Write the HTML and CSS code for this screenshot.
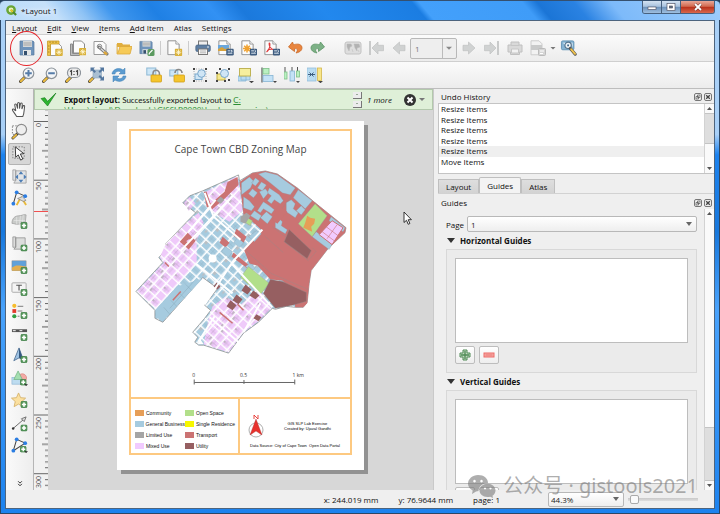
FILE: index.html
```html
<!DOCTYPE html>
<html lang="en">

<head>
 <meta charset="UTF-8">
 <meta name="viewport" content="width=device-width, initial-scale=1.0">
 <link rel="stylesheet" href="styles.css">
 <title>*Layout 1</title>
</head>

<body>
 <!-- Icon sprite -->
 <svg class="sprite" aria-hidden="true">
  <defs>
   <symbol id="badge-star" viewBox="0 0 8 8"><rect width="8" height="8" rx="1" fill="#d9b13b"/><path d="M4 1v6M1 4h6M2 2l4 4M6 2L2 6" stroke="#fff8d8" stroke-width=".9"/></symbol>
   <symbol id="badge-plus" viewBox="0 0 8 8"><rect x=".5" y=".5" width="7" height="7" rx="1.500" fill="#5b9a5f" stroke="#3d7f45"/><path d="M4 1.600v4.800M1.600 4h4.800" stroke="#fff" stroke-width="1.800"/></symbol>
   <symbol id="badge-export" viewBox="0 0 8 8"><rect width="8" height="7.500" rx="1.500" fill="#3f5d80"/><path d="M1.500 2.500h3M1.500 5h5M5 1.500l1.500 1.300L5 4" stroke="#e8f0f8" fill="none"/></symbol>
   <symbol id="disk" viewBox="0 0 16 16"><path d="M1 1h13l1 1v13H1z" fill="#6f94bb" stroke="#56789e" stroke-width=".7"/><rect x="4" y="1" width="9" height="6" fill="#d5d8d8"/><path d="M4.500 3h8M4.500 5h8" stroke="#999" stroke-width=".8"/><rect x="4" y="10" width="8" height="5" fill="#e4e6e6"/><rect x="5" y="11" width="3" height="4" fill="#35506e"/></symbol>
   <symbol id="sheet" viewBox="0 0 16 16"><path d="M2 .6h8.500l3.500 3.500v11.300H2z" fill="#fcfcfc" stroke="#8b8b8b"/><path d="M10.500 .6v3.500H14" fill="#eee" stroke="#8b8b8b" stroke-width=".8"/></symbol>
   <symbol id="new-layout" viewBox="0 0 16 16"><path d="M3.500 3.500h8l3 3v9h-11z" fill="#fcfcfc" stroke="#999"/><path d="M.5 1h11.500v3H3.500v11.500h-3z" fill="#efc34b" stroke="#c99c2a" stroke-width=".8"/><path d="M3 1.500v1.500M6 1.500v1.500M9 1.500v1.500M1 6h1.500M1 9h1.500M1 12h1.500" stroke="#8a6d1d" stroke-width=".7"/><use href="#badge-star" x="8" y="8.500" width="8" height="7.500"/></symbol>
   <symbol id="duplicate" viewBox="0 0 16 16"><path d="M.5 4h2v9.500h7v2h-9z" fill="#bbb" stroke="#8b8b8b"/><path d="M3.500 1h8l3 3v9h-11z" fill="#fcfcfc" stroke="#8b8b8b"/><use href="#badge-star" x="9" y="8" width="7.500" height="7.500"/></symbol>
   <symbol id="manager" viewBox="0 0 16 16"><path d="M1 1.500h9l3 3v10H1z" fill="#fcfcfc" stroke="#999"/><path d="M6 7l8 7" stroke="#777" stroke-width="3" stroke-linecap="round"/><path d="M6.500 7.500l7 6" stroke="#d8d8d8" stroke-width="1.500" stroke-linecap="round"/><circle cx="6.500" cy="6.500" r="2.200" fill="none" stroke="#888"/><path d="M11 12l3 2.500" stroke="#dca73c" stroke-width="2.500"/></symbol>
   <symbol id="folder" viewBox="0 0 16 16"><path d="M1 3h5l1 1.500h7V7H1z" fill="#e0ae3f"/><path d="M1 4v10h13l2-7.500H4L2 13" fill="#f6ca57" stroke="#dca83a" stroke-width=".8"/></symbol>
   <symbol id="save-template" viewBox="0 0 16 16"><use href="#disk" width="14" height="15"/><rect x="8.500" y="9" width="7" height="7" rx="1.500" fill="#5b9a5f"/><path d="M10 14.500l.5-1.500 3-3" stroke="#fff" stroke-width="1.200"/></symbol>
   <symbol id="add-page" viewBox="0 0 16 16"><use href="#sheet" x="-1" width="15" height="15.500"/><use href="#badge-star" x="7.500" y="8.500" width="8" height="7.500"/></symbol>
   <symbol id="print" viewBox="0 0 16 16"><rect x="3.500" y="1" width="9" height="5" fill="#eee" stroke="#777"/><rect x=".8" y="5" width="14.500" height="6.500" rx="1.500" fill="#5f7fa3" stroke="#46627f" stroke-width=".7"/><rect x="3.500" y="9" width="9" height="5.500" fill="#f7f7f7" stroke="#777"/><path d="M5 11h6M5 12.800h6" stroke="#999" stroke-width=".7"/><circle cx="13" cy="7" r=".8" fill="#fff"/></symbol>
   <symbol id="export-image" viewBox="0 0 16 16"><use href="#sheet" x="-1" width="15" height="15.500"/><rect x="0" y="5" width="11" height="6" fill="#6ba7dc"/><path d="M0 11V9l4-2 3 2 4-1v3z" fill="#d8a23b"/><use href="#badge-export" x="8" y="8.500" width="8" height="7.500"/></symbol>
   <symbol id="export-svg" viewBox="0 0 16 16"><use href="#sheet" x="-1" width="15" height="15.500"/><path d="M6 4.500v8M2 8.500h8M3.200 5.700l5.600 5.600M8.800 5.700l-5.600 5.600" stroke="#f0a12e" stroke-width="1.500"/><use href="#badge-export" x="8.500" y="8.500" width="8" height="7.500"/></symbol>
   <symbol id="export-pdf" viewBox="0 0 16 16"><use href="#sheet" x="-1" width="15" height="15.500"/><path d="M2.500 12C5 10 6.500 6 5.800 3.500 5.200 2 4.500 4 6 7c1 1.800 2 2.500 4 2.500M3 10.500c2-1.200 4-1.500 6.500-1" fill="none" stroke="#e0393a" stroke-width="1.100"/><use href="#badge-export" x="8.500" y="8.500" width="8" height="7.500"/></symbol>
   <symbol id="undo" viewBox="0 0 16 16"><path d="M5.500 2L1.500 7l6 4.500V8.700c3-.5 4 1.300 1.500 4.300 5-1 7-4 5.500-7C13 3.500 9.500 4 6.500 4.700z" fill="#e9853e" stroke="#ca6927" stroke-width=".8"/></symbol>
   <symbol id="redo" viewBox="0 0 16 16"><path d="M10.500 2l4 5-6 4.500V8.700c-3-.5-4 1.300-1.500 4.300-5-1-7-4-5.500-7C3 3.500 6.500 4 9.500 4.700z" fill="#7db186" stroke="#5c9466" stroke-width=".8"/></symbol>
   <symbol id="atlas" viewBox="0 0 18 16"><rect x="1" y="2" width="16" height="12" rx="2" fill="#dedede" stroke="#c2c2c2"/><path d="M3 4h4l1 2-2 1-1 4-2-4zM10 4h5l1 3-3 1v3l-2-3zM8 9l1 3M14 10l1 2" fill="#b2b2b2" stroke="#bbb" stroke-width=".5"/></symbol>
   <symbol id="arrow-left" viewBox="0 0 16 16"><path d="M2 8l6.500-6v3.300H14v5.400H8.500V14z" fill="#d0d2d2" stroke="#c0c2c2" stroke-width=".7"/></symbol>
   <symbol id="arrow-first" viewBox="0 0 16 16"><path d="M2 1v14" stroke="#c4c6c6" stroke-width="1.800"/><path d="M4 8l6-6v3.300h5.500v5.400H10V14z" fill="#d0d2d2" stroke="#c0c2c2" stroke-width=".7"/></symbol>
   <symbol id="print-off" viewBox="0 0 16 16"><path d="M4 2h8v3h3v7h-2.500v2.500h-9V12H1V5h3z" fill="#d9d9d9" stroke="#c0c0c0"/><path d="M4 5.500h8M4.500 9h7v4h-7z" fill="#f2f2f2" stroke="#c6c6c6"/></symbol>
   <symbol id="export-off" viewBox="0 0 16 16"><path d="M1 .8h8l3 3v11H1z" fill="#f2f2f2" stroke="#ccc"/><rect x="1" y="5" width="11" height="5" fill="#c9caca"/><rect x="8.500" y="8.500" width="7" height="7" rx="1" fill="#d5d5d5" stroke="#bbb"/><path d="M10 11h4M10 13.500h3" stroke="#fff"/></symbol>
   <symbol id="atlas-zoom" viewBox="0 0 18 18"><rect x=".5" y="1" width="14" height="10" rx="1.500" fill="#86b4d4" stroke="#5e8fb2"/><path d="M2 3h3v3zM10 3h3v5z" fill="#e5f1f7"/><circle cx="8" cy="6" r="3.600" fill="#eef4f8" stroke="#55738c" stroke-width="1.300"/><path d="M7 5h2v2H7z" fill="#406a8c"/><path d="M10.500 9.500l5.500 6.500" stroke="#555" stroke-width="3.400" stroke-linecap="round"/><path d="M11.500 10.500l4.300 5" stroke="#eec14c" stroke-width="2.200" stroke-linecap="round"/></symbol>
   <symbol id="lens" viewBox="0 0 16 16"><path d="M6 10L1.500 14.500" stroke="#4c4538" stroke-width="3" stroke-linecap="round"/><path d="M4.800 11.200l-3 3" stroke="#edbd40" stroke-width="2" stroke-linecap="round"/><circle cx="9.500" cy="6.300" r="5.300" fill="#f3f5f7" stroke="#8d949b" stroke-width="1.200"/></symbol>
   <symbol id="zoom-in" viewBox="0 0 16 16"><use href="#lens"/><path d="M9.500 3v6.600M6.200 6.300h6.600" stroke="#567ca8" stroke-width="2"/></symbol>
   <symbol id="zoom-out" viewBox="0 0 16 16"><use href="#lens"/><path d="M6.200 6.300h6.600" stroke="#567ca8" stroke-width="2"/></symbol>
   <symbol id="zoom-actual" viewBox="0 0 16 16"><path d="M6 10L1.500 14.500" stroke="#4c4538" stroke-width="3" stroke-linecap="round"/><path d="M4.800 11.200l-3 3" stroke="#edbd40" stroke-width="2" stroke-linecap="round"/><rect x="2.500" y="1" width="13" height="9.500" rx="4.500" fill="#eee" stroke="#8d949b" stroke-width="1.200"/><path d="M5 4.500l1.500-1v5M11 4.500l1.500-1v5M9 4v1M9 7v1" stroke="#444" stroke-width="1.200" fill="none"/></symbol>
   <symbol id="zoom-full" viewBox="0 0 16 16"><path d="M5 11L1.500 14.500" stroke="#4c4538" stroke-width="3" stroke-linecap="round"/><path d="M4.500 11.500l-2.700 2.700" stroke="#edbd40" stroke-width="2" stroke-linecap="round"/><rect x="5" y="3" width="8.500" height="8" fill="#a9bfd2" stroke="#8ba5bd" stroke-width=".6"/><path d="M2.500 .5h4.500L5.500 2 8 4.500 6.500 6 4 3.500 2.500 5zM16 .5v4.500l-1.500-1.500L12 6l-1.500-1.500L13 2 11.500 .5zM16 13.500h-4.500L13 12l-2.500-2.500L12 8l2.500 2.500L16 9z" fill="#54779f"/></symbol>
   <symbol id="refresh" viewBox="0 0 16 16"><path d="M1 7C1.500 2 8 0 12 3l2-2v6H8l2-2C7 3.500 4.500 4.500 4 7zM15 9c-.5 5-7 7-11 4l-2 2V9h6l-2 2c3 1.500 5.500 .5 6-2z" fill="#5b9bd0" stroke="#4482b5" stroke-width=".5"/></symbol>
   <symbol id="lock" viewBox="0 0 16 16"><rect x=".8" y="1" width="9" height="7" fill="#cce6f7" stroke="#8db8d4"/><path d="M7 9V6.500a3.200 3.200 0 0 1 6.400 0V9" fill="none" stroke="#888" stroke-width="1.500"/><rect x="5" y="8" width="10.500" height="7" rx=".8" fill="#f5c52c" stroke="#cfa01c" stroke-width=".8"/></symbol>
   <symbol id="unlock" viewBox="0 0 16 16"><rect x=".8" y="3" width="8" height="6" fill="#cce6f7" stroke="#8db8d4"/><path d="M6 6a3.500 3.500 0 0 1 7 0" fill="none" stroke="#888" stroke-width="1.700"/><rect x="5" y="8" width="10.500" height="7" rx=".8" fill="#f5c52c" stroke="#cfa01c" stroke-width=".8"/></symbol>
   <symbol id="group" viewBox="0 0 16 16"><path d="M1 1h2v2H1zM13 1h2v2h-2zM1 13h2v2H1zM13 13h2v2h-2z" fill="#444"/><path d="M4 2h8M4 14h8M2 4v8M14 4v8" stroke="#999" stroke-dasharray="1 1.500" stroke-width=".8"/><rect x="3" y="7" width="7" height="5.500" fill="#cfe5f5" stroke="#79a7cb"/><circle cx="9.500" cy="6.500" r="3.800" fill="#cfe5f5" stroke="#79a7cb"/></symbol>
   <symbol id="ungroup" viewBox="0 0 16 16"><rect x="2" y="7" width="8" height="6" fill="#f5e88e" stroke="#bfae44"/><circle cx="9.500" cy="6.500" r="4" fill="#cfe5f5" stroke="#79a7cb"/><path d="M1 5h2v2H1zM13 1h2v2h-2zM1 13h2v2H1zM13 12h2v2h-2zM4 1h2v2H4zM9 13h2v2H9z" fill="#444"/></symbol>
   <symbol id="raise" viewBox="0 0 16 16"><path d="M0 9h8v5H0zM3 8h9v5H3z" fill="#b9dcf2" stroke="#86b5d4" stroke-width=".8"/><rect x="1.500" y="1.500" width="11" height="7.500" fill="#f5ef9e" stroke="#bfb355"/><path d="M11 14h5l-2.500 2.200z" fill="#444"/></symbol>
   <symbol id="align" viewBox="0 0 16 16"><path d="M1 .5v15" stroke="#555" stroke-width="1.200"/><rect x="2" y="1.500" width="6" height="5.500" fill="#b9f0c1" stroke="#7dbf88" stroke-width=".8"/><rect x="2" y="8.500" width="10" height="6" fill="#c4e2f6" stroke="#86b5d4" stroke-width=".8"/><path d="M12 14h4l-2 2z" fill="#444"/></symbol>
   <symbol id="distribute" viewBox="0 0 16 16"><path d="M1 0v7M8 0v4M13.500 0v4" stroke="#555"/><rect x="0" y="5" width="3" height="7" fill="#b9f0c1" stroke="#7dbf88" stroke-width=".8"/><rect x="6" y="4" width="4.500" height="10" fill="#c4e2f6" stroke="#86b5d4" stroke-width=".8"/><rect x="12.500" y="4" width="3" height="6" fill="#b9f0c1" stroke="#7dbf88" stroke-width=".8"/><path d="M12 14h4l-2 2z" fill="#444"/></symbol>
   <symbol id="resize" viewBox="0 0 16 16"><rect x="0" y="1" width="9" height="13" fill="#b9dcf2" stroke="#94bedb" stroke-width=".8"/><path d="M1 7.500h3M5 7.500h3M2.500 5.500l2 2-2 2M6.500 5.500l-2 2 2 2" stroke="#2f4f73" fill="none" stroke-width=".9"/><rect x="10.500" y="1" width="4" height="12.500" fill="#f8e68a" stroke="#d3b64b" stroke-width=".8"/><path d="M11 14h5l-2.500 2.200z" fill="#444"/></symbol>
   <symbol id="hand" viewBox="0 0 18 18"><path d="M6 16.500C4 13 2 11 1.500 9.500c0-1.500 1.800-1.200 3 .7L5 10 4 4.500c-.2-1.700 1.700-1.900 2 0L7 8V2.800c0-1.700 2-1.700 2 0V8l1-4.800c.3-1.700 2-1.300 1.900.3L11.500 8.500l1.200-3c.6-1.400 2.100-.7 1.700.7C13.800 9.500 14 14 12.500 16.500z" fill="#fff" stroke="#555" stroke-width="1.100"/></symbol>
   <symbol id="zoom-tool" viewBox="0 0 18 18"><rect x="1.500" y="3" width="10" height="9" fill="none" stroke="#777" stroke-dasharray="1.500 1.500"/><path d="M7 11L2 16" stroke="#4c4538" stroke-width="3" stroke-linecap="round"/><path d="M5.500 12.500L2.200 15.800" stroke="#edbd40" stroke-width="1.900" stroke-linecap="round"/><circle cx="11" cy="7" r="5.500" fill="#eee" stroke="#8d8d8d" stroke-width="1.300"/></symbol>
   <symbol id="select-tool" viewBox="0 0 18 18"><rect x="2" y="2" width="12" height="12" fill="#ddd" stroke="#777" stroke-dasharray="1.500 1.500"/><path d="M4.500 2l.5 11 2.700-2.500 2.500 5.500 2.300-1.200-2.600-5.300 3.800-.3z" fill="#fff" stroke="#333"/></symbol>
   <symbol id="move-content" viewBox="0 0 18 18"><path d="M2 2h3v11H2zM5 3h11v13H3l2-3z" fill="#e2e4e6" stroke="#999" stroke-width=".8"/><path d="M10.500 3.500l2.500 3H8zM10.500 15.500l2.500-3H8zM4.500 9.500l3-2.500v5zM16.500 9.500l-3-2.500v5z" fill="#4c7db5"/></symbol>
   <symbol id="edit-nodes" viewBox="0 0 18 18"><path d="M2.500 14.500L6 2.500l9 4" fill="none" stroke="#444" stroke-width="1.100"/><path d="M6 16c2-5 4-7 5-8l5 8" fill="none" stroke="#e8b93a" stroke-width="2"/><path d="M7 9l5-2 4 4-3 1z" fill="#ddd" stroke="#777" stroke-width=".7"/><circle cx="6" cy="2.500" r="2" fill="#2b7de2"/><circle cx="15" cy="6.500" r="2" fill="#2b7de2"/><circle cx="2.500" cy="14.500" r="2" fill="#2b7de2"/></symbol>
   <symbol id="add-map" viewBox="0 0 18 18"><path d="M1 11c0-5 3-8 7-8s5-2 8-1l-1 9c-4-1-5 1-8 1s-4-1-6-1z" fill="#c9cbc9" stroke="#999" stroke-width=".7"/><path d="M3 8h12M6 4v8M10 3l-1 9M13 2l-1 9" stroke="#eee" stroke-width=".6"/><use href="#badge-plus" x="10" y="9.500" width="7.500" height="7.500"/></symbol>
   <symbol id="add-3d" viewBox="0 0 18 18"><path d="M2 2h3v11H2zM5 3h10v12H3l2-2z" fill="#dcdddc" stroke="#8e8e8e" stroke-width=".8"/><use href="#badge-plus" x="10" y="10" width="7.500" height="7.500"/></symbol>
   <symbol id="add-picture" viewBox="0 0 18 18"><rect x="1" y="3" width="15" height="10.500" fill="#5fa1da" stroke="#888" stroke-width=".5"/><path d="M1 13.500V10c3-2 5-2.500 8-2s5 1 7 1v4.500z" fill="#e2ae50"/><use href="#badge-plus" x="10" y="9.500" width="7.500" height="7.500"/></symbol>
   <symbol id="add-label" viewBox="0 0 18 18"><rect x="1" y="3" width="15" height="10" rx="1" fill="#f4f4f4" stroke="#aaa"/><path d="M5.500 5.500h6M8.500 5.500v5.500" stroke="#555" stroke-width="1.200"/><use href="#badge-plus" x="10" y="9.500" width="7.500" height="7.500"/></symbol>
   <symbol id="add-legend" viewBox="0 0 18 18"><circle cx="3.500" cy="3" r="2.200" fill="#f6bd2d"/><rect x="1.500" y="6.500" width="4" height="4" fill="#e23a2d"/><circle cx="3.500" cy="14" r="2.200" fill="#2f9e42"/><path d="M7 3.500h6M7 8.500h5M7 14h2" stroke="#777"/><use href="#badge-plus" x="10" y="9.500" width="7.500" height="7.500"/></symbol>
   <symbol id="add-scalebar" viewBox="0 0 18 18"><rect x="1" y="4.500" width="16" height="3" fill="#555"/><path d="M2 6h3M9 6h3" stroke="#fff"/><use href="#badge-plus" x="10" y="9.500" width="7.500" height="7.500"/></symbol>
   <symbol id="add-north" viewBox="0 0 18 18"><path d="M8.500 1L3 14.500l5.500-3 4.500 2z" fill="#9fc3e4" stroke="#4a6c90" stroke-width=".9"/><path d="M8.500 1v10.500l4.500 2z" fill="#34587f"/><use href="#badge-plus" x="10" y="9.500" width="7.500" height="7.500"/></symbol>
   <symbol id="add-shape" viewBox="0 0 18 18"><circle cx="12" cy="8.500" r="4.500" fill="#f3aaa5" stroke="#d7827d" stroke-width=".7"/><rect x="1" y="8" width="9" height="7" fill="#bddcf0" stroke="#8db5d2" stroke-width=".7"/><path d="M7.500 1L3 10h9z" fill="#a5dfb1" stroke="#68af79" stroke-width=".7"/><use href="#badge-plus" x="9.500" y="9.500" width="7" height="7"/><path d="M14 15h4l-2 2z" fill="#222"/></symbol>
   <symbol id="add-marker" viewBox="0 0 18 18"><path d="M8 1l2.200 5 5.300.5-4 3.600 1.200 5.400L8 12.800l-4.700 2.700 1.200-5.400-4-3.600L5.800 6z" fill="#fbe0a0" stroke="#d5b066" stroke-width=".9"/><use href="#badge-plus" x="10" y="9.500" width="7.500" height="7.500"/></symbol>
   <symbol id="add-arrow" viewBox="0 0 18 18"><path d="M2 14.500L13 5" stroke="#666"/><path d="M16 2l-5 2 3 3z" fill="#ddd" stroke="#555" stroke-width=".8"/><circle cx="2.300" cy="14.200" r="1.300" fill="#333"/><use href="#badge-plus" x="10" y="10" width="7.500" height="7.500"/></symbol>
   <symbol id="add-node" viewBox="0 0 18 18"><path d="M2.500 14.500L6 2.500l9 4z" fill="#f6f6f6" stroke="#444" stroke-width="1.100"/><circle cx="6" cy="2.500" r="2" fill="#2b7de2"/><circle cx="15" cy="6.500" r="2" fill="#2b7de2"/><circle cx="2.500" cy="14.500" r="2" fill="#2b7de2"/><use href="#badge-plus" x="9.500" y="9.500" width="7" height="7"/><path d="M14 15h4l-2 2z" fill="#222"/></symbol>
   <symbol id="dock-float" viewBox="0 0 8 8"><rect x=".5" y=".5" width="7" height="7" rx="1.500" fill="#eee" stroke="#777"/><path d="M3.500 2h2.500v2.500H3.500zM2 3.500h2.500V6H2z" fill="none" stroke="#555" stroke-width=".7"/></symbol>
   <symbol id="dock-close" viewBox="0 0 8 8"><rect x=".5" y=".5" width="7" height="7" rx="1.500" fill="#eee" stroke="#777"/><path d="M2.200 2.200l3.600 3.600M5.800 2.200L2.200 5.800" stroke="#444" stroke-width="1.300"/></symbol>
  </defs>
 </svg>

 <div class="window">
  <header class="titlebar">
   <svg class="logo" viewBox="0 0 12 12"><circle cx="5.500" cy="5.500" r="4" fill="#e8f3c0" stroke="#69a536" stroke-width="2.600"/><path d="M5.500 5.500L11 11" stroke="#4f8a2b" stroke-width="2.400"/><path d="M5 5l2.500 2.500" stroke="#eeca2c" stroke-width="2"/></svg>
   <h1>*Layout 1</h1>
   <div class="window-buttons">
    <button class="win-min" aria-label="Minimize"><svg viewBox="0 0 10 8"><rect x="1" y="4" width="8" height="2.500" fill="#fff" stroke="#445" stroke-width=".6"/></svg></button>
    <button class="win-max" aria-label="Maximize"><svg viewBox="0 0 10 8"><rect x="1" y=".5" width="8" height="7" fill="#fff" stroke="#445" stroke-width=".6"/><rect x="3.500" y="3" width="3" height="2" fill="#678" stroke="#445" stroke-width=".6"/></svg></button>
    <button class="win-close" aria-label="Close"><svg viewBox="0 0 10 8"><path d="M2 1l6 6M8 1L2 7" stroke="#633" stroke-width="2.800"/><path d="M2 1l6 6M8 1L2 7" stroke="#fff" stroke-width="1.800"/></svg></button>
   </div>
  </header>

  <div class="client">
   <nav class="menubar">
    <a href="#"><u>L</u>ayout</a>
    <a href="#"><u>E</u>dit</a>
    <a href="#"><u>V</u>iew</a>
    <a href="#"><u>I</u>tems</a>
    <a href="#"><u>A</u>dd Item</a>
    <a href="#">Atlas</a>
    <a href="#">Settings</a>
   </nav>

   <div class="toolbar">
    <span class="grip"></span>
    <button aria-label="Save project"><svg><use href="#disk"/></svg><span class="ring"></span></button>
    <span class="gap"></span>
    <button aria-label="New layout"><svg><use href="#new-layout"/></svg></button>
    <button aria-label="Duplicate layout"><svg><use href="#duplicate"/></svg></button>
    <button aria-label="Layout manager"><svg><use href="#manager"/></svg></button>
    <button aria-label="Add items from template"><svg><use href="#folder"/></svg></button>
    <button aria-label="Save as template"><svg><use href="#save-template"/></svg></button>
    <span class="sep"></span>
    <button aria-label="Add pages"><svg><use href="#add-page"/></svg></button>
    <span class="sep"></span>
    <button aria-label="Print layout"><svg><use href="#print"/></svg></button>
    <button aria-label="Export as image"><svg><use href="#export-image"/></svg></button>
    <button aria-label="Export as SVG"><svg><use href="#export-svg"/></svg></button>
    <button aria-label="Export as PDF"><svg><use href="#export-pdf"/></svg></button>
    <button aria-label="Undo"><svg><use href="#undo"/></svg></button>
    <button aria-label="Redo"><svg><use href="#redo"/></svg></button>
    <span class="grip wide"></span>
    <button aria-label="Preview atlas" disabled><svg class="large"><use href="#atlas"/></svg></button>
    <button aria-label="First feature" disabled><svg><use href="#arrow-first"/></svg></button>
    <button aria-label="Previous feature" disabled><svg><use href="#arrow-left"/></svg></button>
    <select class="atlas-page" aria-label="Atlas page" disabled><option>1</option></select>
    <button class="flip" aria-label="Next feature" disabled><svg><use href="#arrow-left"/></svg></button>
    <button class="flip" aria-label="Last feature" disabled><svg><use href="#arrow-first"/></svg></button>
    <button aria-label="Print atlas" disabled><svg><use href="#print-off"/></svg></button>
    <button aria-label="Export atlas" disabled><svg><use href="#export-off"/></svg></button>
    <span class="caret"></span>
    <button aria-label="Atlas settings"><svg class="large"><use href="#atlas-zoom"/></svg></button>
   </div>

   <div class="toolbar">
    <span class="grip"></span>
    <button aria-label="Zoom in"><svg><use href="#zoom-in"/></svg></button>
    <button aria-label="Zoom out"><svg><use href="#zoom-out"/></svg></button>
    <button aria-label="Zoom to 100%"><svg><use href="#zoom-actual"/></svg></button>
    <button aria-label="Zoom full"><svg><use href="#zoom-full"/></svg></button>
    <button aria-label="Refresh view"><svg><use href="#refresh"/></svg></button>
    <span class="grip wide"></span>
    <button aria-label="Lock items"><svg><use href="#lock"/></svg></button>
    <button aria-label="Unlock items"><svg><use href="#unlock"/></svg></button>
    <button aria-label="Group"><svg><use href="#group"/></svg></button>
    <button aria-label="Ungroup"><svg><use href="#ungroup"/></svg></button>
    <button aria-label="Raise"><svg><use href="#raise"/></svg></button>
    <button aria-label="Align"><svg><use href="#align"/></svg></button>
    <button aria-label="Distribute"><svg><use href="#distribute"/></svg></button>
    <button aria-label="Resize"><svg><use href="#resize"/></svg></button>
   </div>

   <main class="workspace">
    <aside class="toolbox">
     <span class="grip-top"></span>
     <div class="tools">
      <button aria-label="Pan layout"><svg><use href="#hand"/></svg></button>
      <button aria-label="Zoom"><svg><use href="#zoom-tool"/></svg></button>
      <button class="active" aria-label="Select item"><svg><use href="#select-tool"/></svg></button>
      <button aria-label="Move item content"><svg><use href="#move-content"/></svg></button>
      <button aria-label="Edit nodes"><svg><use href="#edit-nodes"/></svg></button>
      <button aria-label="Add map"><svg><use href="#add-map"/></svg></button>
      <button aria-label="Add 3D map"><svg><use href="#add-3d"/></svg></button>
      <button aria-label="Add picture"><svg><use href="#add-picture"/></svg></button>
      <button aria-label="Add label"><svg><use href="#add-label"/></svg></button>
      <button aria-label="Add legend"><svg><use href="#add-legend"/></svg></button>
      <button aria-label="Add scale bar"><svg><use href="#add-scalebar"/></svg></button>
      <button aria-label="Add north arrow"><svg><use href="#add-north"/></svg></button>
      <button aria-label="Add shape"><svg><use href="#add-shape"/></svg></button>
      <button aria-label="Add marker"><svg><use href="#add-marker"/></svg></button>
      <button aria-label="Add arrow"><svg><use href="#add-arrow"/></svg></button>
      <button aria-label="Add node item"><svg><use href="#add-node"/></svg></button>
     </div>
     <button class="more-tools" aria-label="More tools"><svg viewBox="0 0 8 8"><path d="M1.500 1L4 3.500 6.500 1M1.500 4.500L4 7l2.500-2.500" fill="none" stroke="#222" stroke-width="1.200"/></svg></button>
    </aside>

    <section class="view">
     <div class="message">
      <svg class="tick" viewBox="0 0 18 14"><path d="M1 6l4-1 3 4 9-9-9 14z" fill="#2db52f" stroke="#157a1c" stroke-width=".7"/></svg>
      <p><b>Export layout:</b> Successfully exported layout to <a href="#">C:<br>\Users\ujaval\Downloads\GISSLP2020\landuse_mapping\map.png</a></p>
      <div class="message-scroll"><button aria-label="Scroll up"></button><button aria-label="Scroll down"></button></div>
      <i>1 more</i>
      <button class="dismiss" aria-label="Dismiss"><svg viewBox="0 0 12 12"><circle cx="6" cy="6" r="6" fill="#333"/><path d="M3.500 3.500l5 5M8.500 3.500l-5 5" stroke="#fff" stroke-width="2"/></svg></button>
      <span class="caret"></span>
     </div>
     <div class="canvas-row">
      <svg class="ruler" viewBox="34 110 14 380" preserveAspectRatio="xMinYMin slice">
       <defs>
        <pattern id="ticks" x="34" y="121" width="14" height="58.700" patternUnits="userSpaceOnUse">
         <path d="M0 .5h14" stroke="#666"/>
         <path d="M8 29.800h6" stroke="#555"/>
         <path d="M11 6.400h3M11 12.200h3M11 18.100h3M11 24h3M11 35.700h3M11 41.600h3M11 47.500h3M11 53.300h3" stroke="#666"/>
        </pattern>
       </defs>
       <rect x="34" y="110" width="14" height="380" fill="#f1f1f1"/>
       <rect x="34" y="110" width="14" height="380" fill="url(#ticks)"/>
       <path d="M34 211.500h14" stroke="#f05050"/>
       <g class="ruler-text">
        <text transform="translate(41 127) rotate(-90)">0</text>
        <text transform="translate(41 190) rotate(-90)">50</text>
        <text transform="translate(41 253) rotate(-90)">100</text>
        <text transform="translate(41 312) rotate(-90)">150</text>
        <text transform="translate(41 370) rotate(-90)">200</text>
        <text transform="translate(41 429) rotate(-90)">250</text>
        <text transform="translate(41 488) rotate(-90)">300</text>
       </g>
      </svg>
      <div class="canvas">
       <article class="sheet">
        <div class="map-frame">
         <h2>Cape Town CBD Zoning Map</h2>
         <svg class="map" viewBox="130 160 220 237">
          <defs>
           <pattern id="blocks-blue" width="27" height="17" patternUnits="userSpaceOnUse" patternTransform="translate(135 291) rotate(42)">
            <rect width="27" height="17" fill="#fff"/>
            <path d="M0 0h7.400v7H0zM9 0h7.400v7H9zM18 0h7.400v7h-7.400zM0 8.500h7.400v7H0zM9 8.500h7.400v7H9zM18 8.500h7.400v7h-7.400z" fill="#a6cbdf"/>
            <path d="M18 0h3v3h-3zM11 8.500h2v3h-2z" fill="#b9c0c5"/>
            <path d="M3.500 0v7M0 3.400h7M12 0v3.500M9 3.500h7M21 8.500v7M18 12h7M0 12h7" stroke="#8fb3c6" stroke-width=".4"/>
           </pattern>
           <pattern id="blocks-lilac" width="27" height="17" patternUnits="userSpaceOnUse" patternTransform="translate(135 291) rotate(42)">
            <rect width="27" height="17" fill="#fff"/>
            <path d="M0 0h7.400v7H0zM9 0h7.400v7H9zM18 0h7.400v7h-7.400zM0 8.500h7.400v7H0zM9 8.500h7.400v7H9zM18 8.500h7.400v7h-7.400z" fill="#efcafa"/>
            <path d="M5 0h2v3H5zM18 11h2v2h-2zM9 4h2v3H9z" fill="#c3b6c6"/>
            <path d="M3.500 0v7M0 3.500h7M12 0v7M9 3.500h7M21 8.500v7M18 12h7M3.500 8.500v7M0 12h7M12 8.500v7" stroke="#b99bc0" stroke-width=".4"/>
           </pattern>
          </defs>
          <path d="M182 202L189 195 202 190 238 174 239 180 252 172 265 170 277 173 297 187 315 202 346 227 345 232 328 248 311 270 309 283 307 302 303 307 295 307 286 306 275 309 272 308 258 322 243 333 228 353 203 345 198 345 194 342 197 337 192 332 204 318 210 310 204 305 217 288 202 277 162 322 154 318 154 310 135 291 162 262 158 257 164 250 165 243 187 220 195 212z" fill="url(#blocks-blue)" stroke="#888" stroke-width=".7"/>
          <!-- mixed use -->
          <path d="M136 291L163 262 159 257 165 243 188 220 198 212 203 222 196 240 196 262 176 285 155 309z" fill="url(#blocks-lilac)"/>
          <path d="M205 191L237 175 242 210 229 221 211 211zM183 202L189 196 195 203 188 210zM212 306L225 296 240 305 258 287 271 308 258 321 243 332 228 352 203 344 208 318z" fill="url(#blocks-lilac)"/>
          <path d="M202 278L162 321 155 317 155 309 176 286z" fill="#a6cbdf"/>
          <path d="M193 281l-24 27M185 284l6 6M178 292l6 6M170 300l6 6M163 307l6 7" fill="none" stroke="#87a9ba" stroke-width=".5"/>
          <!-- transport -->
          <path d="M203 191L206 191 210 203 224 191 227 181 237 176 238 184 224 198 211 209 206 206z" fill="#cb7373"/>
          <path d="M239 181L252 172 265 170 277 173 297 187 315 202 346 227 345 232 328 248 311 270 309 283 307 303 303 307 295 307 292 290 282 280 270 279 257 265 249 263 243 248 252 239 262 230 252 221 243 214z" fill="#cb7373"/>
          <path d="M187 232l8 8-7 9-9-8zM222 236l7 6-4 5-6-5zM236 228l10 8-3 6-10-7zM233 252l16 13-2 3-16-12z" fill="#cb7373"/>
          <path d="M219 312l13 11M172 300l8-9M237 304l6 6M164 262l4 4" stroke="#cb7373" stroke-width="1.500"/>
          <path d="M186 241l3-2" stroke="#ecc8f5" stroke-width="1.500"/>
          <path d="M264 235l19 17M243 248l28 25 37 16M284 241l24 19 8-9-4-4M297 187l-24 33M290 240l-18-14M315 202l-10 15" fill="none" stroke="#a98282" stroke-width=".6"/>
          <!-- general business -->
          <g fill="#a6cbdf" stroke="#8a9ba5" stroke-width=".3">
           <path d="M258 173L265 171 277 174 295 187 290 194 282 192 270 182z"/>
           <path d="M298 189L312 200 305 208 293 197z"/>
           <path d="M241 182l8-6 4 4-3 7-9 7zM255 177l4 3-4 5-4-3zM261 181l5 3-4 6-5-3zM252 188l5 4-4 5-5-4zM243 196l6 4 5 6-3 4-8-3zM259 191l6-3 3 4-5 6zM269 187l10 7 4 6-3 3-6-4-3 4-4-3 4-5-4-3zM263 201l6 4 5 4-3 4-8-5-3 4-3-2zM254 210l7 5-3 5-8-5zM266 211l6 5-5 7-7-6zM286 202l5-3 4 4-2 5 5 4-3 5-9-6zM301 205l4 4-4 5-5-4zM275 222l4-4 3 3-1 4 6 4-2 4-10-6zM312 236l4-5 16 13-3 5zM256 230l5 3-7 8-6-5zM331 216l14 11-2 4-14-11z"/>
           <path d="M237 237l6 5-4 5-6-5zM225 246l7 5-4 6-7-6zM249 263l6 4-4 4-6-5z"/>
          </g>
          <path d="M278 205l9 6-10 12-5-4z" fill="#cb7373"/>
          <!-- open space, community, mixed use -->
          <path d="M315 203L327 215 312 236 298 223zM248 266L269 283 260 294 240 277zM247 217l5 3-2 5-5-3z" fill="#b2df8a" stroke="#999" stroke-width=".4"/>
          <path d="M307 215l3 2 5 1-1 5-3 3 1 5-9-4 2-5z" fill="#e69e57"/>
          <path d="M332 220L343 227 332 244 319 234z" fill="#f1cbff" stroke="#cb7373" stroke-width="1"/>
          <path d="M326 226l12 9M322 231l12 9M337 224l-10 14" stroke="#cb7373" stroke-width=".6"/>
          <!-- limited use -->
          <path d="M240 216l6-4 4 3-5 8-5-2zM220 196l4 3-4 4-4-3z" fill="#a5a5a5"/>
          <!-- utility -->
          <path d="M289 229L311 250 307 258 284 241zM270 279L282 281 306 292 306 301 292 305 275 308 263 293z" fill="#965f61" stroke="#888" stroke-width=".4"/>
          <path d="M245 284l6 5-4 5-6-4zM253 290l6 5-4 4-6-4zM236 294l6 5-4 5-6-4zM230 300l6 5-4 5-6-4zM216 282l4 4-3 3-4-3zM256 314l5 3-3 4-5-3z" fill="#965f61"/>
          <!-- main streets -->
          <path d="M188 231L215 199M204 192l9 24 27 23M262 229L233 260 204 304M209 317L238 342M231 263L272 307M195 263L232 293M180 250L232 195M214 316L198 341M243 332L260 303" fill="none" stroke="#fff" stroke-width="2"/>
          <circle cx="212" cy="258" r="4" fill="#fff"/>
          <path d="M199 338l4 6-6 0z" fill="#fff"/>
          <!-- scale bar -->
          <path d="M193.500 379.500v5M243.500 380v4M294.500 379.500v5M193.500 382.500h101" stroke="#666" fill="none"/>
          <g class="scale-text"><text x="193" y="377">0</text><text x="243" y="377">0.5</text><text x="298" y="377">1 km</text></g>
         </svg>
        </div>
        <div class="sheet-footer">
         <ul class="legend">
          <li><span class="swatch community"></span>Community</li>
          <li><span class="swatch open"></span>Open Space</li>
          <li><span class="swatch business"></span>General Business</li>
          <li><span class="swatch residence"></span>Single Residence</li>
          <li><span class="swatch limited"></span>Limited Use</li>
          <li><span class="swatch transport"></span>Transport</li>
          <li><span class="swatch mixed"></span>Mixed Use</li>
          <li><span class="swatch utility"></span>Utility</li>
         </ul>
         <div class="credits">
          <div class="author">
           <svg class="north" viewBox="0 0 16 24"><path d="M6 5V1l4 4V1" fill="none" stroke="#e8322d" stroke-width=".9"/><circle cx="8" cy="16" r="7" fill="none" stroke="#999" stroke-width=".8"/><path d="M8 5l6 16-6-4-6 4z" fill="#e8322d" stroke="#a33" stroke-width=".4"/></svg>
           <p>GIS SLP Lab Exercise<br>Created by: Ujaval Gandhi</p>
          </div>
          <p>Data Source: City of Cape Town&nbsp; Open Data Portal</p>
         </div>
        </div>
       </article>
       <svg class="pointer" viewBox="0 0 9 14"><path d="M1 1v10.500l2.500-2.200 1.700 4 1.700-.8-1.700-3.800h3.200z" fill="#fff" stroke="#222" stroke-width=".9"/></svg>
      </div>
     </div>
    </section>

    <aside class="docks">
     <section class="dock">
      <header><h3>Undo History</h3><button aria-label="Float"><svg><use href="#dock-float"/></svg></button><button aria-label="Close"><svg><use href="#dock-close"/></svg></button></header>
      <div class="history">
       <ul>
        <li>Resize Items</li>
        <li>Resize Items</li>
        <li>Resize Items</li>
        <li>Resize Items</li>
        <li class="current">Resize Items</li>
        <li>Move Items</li>
       </ul>
       <div class="scrollbar at-end"><button class="up" aria-label="Scroll up"></button><span class="track"></span><span class="thumb"></span><button class="down" aria-label="Scroll down"></button></div>
      </div>
     </section>
     <div class="tabs">
      <button>Layout</button>
      <button class="selected">Guides</button>
      <button>Atlas</button>
     </div>
     <section class="dock guides">
      <header><h3>Guides</h3><button aria-label="Float"><svg><use href="#dock-float"/></svg></button><button aria-label="Close"><svg><use href="#dock-close"/></svg></button></header>
      <div class="guides-scroll">
       <div class="guides-form">
        <div class="page-row"><label for="page">Page</label><select id="page"><option>1</option></select></div>
        <h4>Horizontal Guides</h4>
        <div class="group">
         <div class="guide-list"></div>
         <div class="group-buttons">
          <button aria-label="Add guide"><svg viewBox="0 0 12 12"><path d="M4 1h4v3h3v4H8v3H4V8H1V4h3z" fill="#bfd8bf" stroke="#4f8a55"/><path d="M6 2v8M2 6h8" stroke="#4f8a55" stroke-width="1.300"/></svg></button>
          <button aria-label="Remove guide"><svg viewBox="0 0 12 12"><rect x="1" y="4" width="10" height="4" fill="#f4aaa6" stroke="#ee6a66"/><path d="M2.500 6h7" stroke="#ee6a66" stroke-width=".8"/></svg></button>
         </div>
        </div>
        <h4>Vertical Guides</h4>
        <div class="group">
         <div class="guide-list"></div>
         <div class="group-buttons">
          <button aria-label="Add guide"></button>
          <button aria-label="Remove guide"></button>
         </div>
        </div>
       </div>
       <div class="scrollbar"><button class="up" aria-label="Scroll up"></button><span class="thumb"></span><span class="track"></span><button class="down" aria-label="Scroll down"></button></div>
      </div>
     </section>
    </aside>
   </main>

   <footer class="statusbar">
    <span>x: 244.019 mm</span>
    <span>y: 76.9644 mm</span>
    <span class="page-no">page: 1</span>
    <select class="zoom" aria-label="Zoom level"><option>44.3%</option></select>
    <input type="range" class="zoom-slider" aria-label="Zoom" min="0" max="100" value="3">
    <span class="size-grip"></span>
   </footer>
  </div>

  <div class="watermark">
   <svg viewBox="0 0 28 23"><path fill-rule="evenodd" d="M10 0c6 0 10 3.500 10 8-5 0-9.500 3-9.500 8L8 16.500 4 19l.7-3.500C2 14 0 11.500 0 8.700 0 4 4.500 0 10 0zM6.500 4.800a1.300 1.300 0 1 0 .01 0zM13.500 4.800a1.300 1.300 0 1 0 .01 0z"/><path fill-rule="evenodd" d="M19.500 8.800c4.800 0 8 3.200 8 6.800 0 2.300-1.200 4-3 5.200l.5 2.200-2.800-1.300c-6 1.500-10.700-2-10.700-6.100 0-3.800 3.500-6.800 8-6.800zM17 12.200a1.100 1.100 0 1 0 .01 0zM22.500 12.200a1.100 1.100 0 1 0 .01 0z"/></svg>
   <span>公众号 · gistools2021</span>
  </div>
 </div>
</body>

</html>
```

FILE: styles.css
```css
/* Reset some default styles for browsers */
* {
 box-sizing: border-box;
}

body,
h1,
h2,
h3,
h4,
p,
ul {
 margin: 0;
 padding: 0;
 font-size: 8px;
 font-weight: normal;
}

body {
 font-family: "Open Sans", "Noto Sans", sans-serif;
 line-height: 11px;
 color: #111;
 background-color: #27415f;
}

ul {
 list-style: none;
}

button {
 display: flex;
 align-items: center;
 justify-content: center;
 margin: 0;
 padding: 0;
 border: none;
 background: none;
 font: inherit;
 color: inherit;
}

select {
 appearance: none;
 font: inherit;
 color: #222;
}

svg {
 display: block;
 flex: none;
}

.sprite {
 position: absolute;
 width: 0;
 height: 0;
}

/* Window frame */
.window {
 position: relative;
 display: flex;
 flex-direction: column;
 height: 100vh;
 padding: 0 5px 5px;
 border-top: 1px solid #35506f;
 border-radius: 5px 5px 0 0;
 background: linear-gradient(#a9d0f7, #a9d0f7 26%, #1c82ee 30%, #1878dc 45%, #49a2fb 60%, #1c82ee);
 box-shadow: inset 1px 0 #2c4766, inset -1px -1px #2c4766;
 overflow: hidden;
}

.titlebar {
 display: flex;
 align-items: center;
 gap: 4px;
 height: 19px;
 margin: 0 -5px;
 padding: 0 5px 0 6px;
 background: linear-gradient(50deg, #b9dbf9 0, #c6e1fa 8%, #8fc3f5 12%, #4097ee 16%, #1f80e4 22%, #3291f4 30%, #1b79dc 34%, #2288ee 45%, #1b7de2 58%, #43a0fb 59%, #3f9cf8 73%, #1b75d6 75%, #2a82e2 80%, #7dbafa 85%, #9fcdfb);
}

.titlebar h1 {
 flex: 1;
 text-shadow: 0 0 4px #fff, 0 0 6px #fff;
}

.logo {
 width: 11px;
 height: 11px;
}

.window-buttons {
 display: flex;
 align-self: flex-start;
 border: 1px solid #47607e;
 border-top: none;
 border-radius: 0 0 3px 3px;
 overflow: hidden;
}

.window-buttons button {
 width: 19px;
 height: 12px;
 border-right: 1px solid #47607e;
 background: linear-gradient(#d3e2f2, #a9c3df 45%, #6c91ba 50%, #9fbfe0);
}

.window-buttons .win-close {
 width: 33px;
 border-right: none;
 background: linear-gradient(#e8a797, #d2694f 45%, #b8301a 50%, #d8674c);
}

.window-buttons svg {
 width: 10px;
 height: 8px;
}

.client {
 flex: 1;
 display: flex;
 flex-direction: column;
 min-height: 0;
 border: 1px solid #4d647e;
 background-color: #efefef;
}

/* Menu and toolbars */
.menubar {
 display: flex;
 align-items: center;
 gap: 10px;
 height: 13px;
 padding: 0 6px;
}

.menubar a {
 color: inherit;
 text-decoration: none;
}

.toolbar {
 display: flex;
 align-items: center;
 height: 27px;
 border-top: 1px solid #cfcfcf;
 background: linear-gradient(#fbfbfb, #ececec);
}

.toolbar button {
 position: relative;
 width: 23px;
 height: 23px;
}

.toolbar svg {
 width: 16px;
 height: 16px;
}

.toolbar svg.large {
 width: 18px;
}

.toolbar .flip svg {
 transform: scaleX(-1);
}

.grip {
 flex: none;
 width: 3px;
 height: 13px;
 margin: 0 3px;
 background: radial-gradient(#c4c4c4 40%, transparent 50%) 0 0 / 2px 2px;
}

.grip.wide {
 margin: 0 3px 0 6px;
}

.gap {
 width: 5px;
}

.sep {
 width: 1px;
 height: 14px;
 margin: 0 2px;
 background-color: #ccc;
}

/* Hand drawn highlight round the save button */
.ring {
 position: absolute;
 inset: -6px -5px;
 border: 1px solid #e5262b;
 border-radius: 50%;
 z-index: 2;
}

.caret {
 width: 6px;
 height: 3px;
 margin: 0 1px;
 background-color: #777;
 clip-path: polygon(0 0, 100% 0, 50% 100%);
}

.atlas-page,
.zoom,
#page {
 border: 1px solid #b8b8b8;
 border-radius: 2px;
 background: url("data:image/svg+xml,%3Csvg xmlns='http://www.w3.org/2000/svg' viewBox='0 0 14 6'%3E%3Cpath d='M4 1h6L7 5z' fill='%23666'/%3E%3C/svg%3E") right center / 14px 6px no-repeat, linear-gradient(#fff, #eee);
}

.atlas-page {
 width: 47px;
 height: 21px;
 padding: 0 4px;
 color: #777;
 opacity: 1;
 background: url("data:image/svg+xml,%3Csvg xmlns='http://www.w3.org/2000/svg' viewBox='0 0 14 20'%3E%3Cpath d='M.5 0v20' stroke='%23bbb'/%3E%3Cpath d='M4 8h6L7 11z' fill='%23888'/%3E%3C/svg%3E") right center / 14px 20px no-repeat, #eee;
}

.workspace {
 flex: 1;
 display: flex;
 min-height: 0;
 border-top: 1px solid #bdbdbd;
}

/* Left toolbox */
.toolbox {
 display: flex;
 flex-direction: column;
 align-items: center;
 width: 28px;
 border-right: 1px solid #b5b5b5;
 background: linear-gradient(90deg, #fafafa, #ededed);
}

.grip-top {
 width: 13px;
 height: 3px;
 margin: 4px 0 2px;
 background: radial-gradient(#c4c4c4 40%, transparent 50%) 0 0 / 2px 2px;
}

.tools {
 flex: 1;
 display: flex;
 flex-direction: column;
 justify-content: space-between;
}

.tools button {
 width: 23px;
 height: 22px;
}

.tools .active {
 border: 1px solid #b3b3b3;
 border-radius: 2px;
 background-color: #d6d6d6;
}

.tools svg {
 width: 17px;
 height: 17px;
}

.more-tools {
 height: 14px;
 margin: 19px 0 0;
}

.more-tools svg {
 width: 6px;
 height: 7px;
}

/* Layout view */
.view {
 flex: 1;
 display: flex;
 flex-direction: column;
 min-width: 0;
}

.message {
 display: flex;
 align-items: center;
 height: 21px;
 padding: 0 6px 0 5px;
 border: 1px solid #b3c9ac;
 background-color: #dff0d8;
}

.message .tick {
 width: 17px;
 height: 13px;
}

.message p {
 flex: 1;
 align-self: stretch;
 min-width: 0;
 margin: 5px 0 0 7px;
 font-family: Lato, "Open Sans", sans-serif;
 line-height: 10px;
 white-space: nowrap;
 overflow: hidden;
}

.message b {
 font-family: "Open Sans", sans-serif;
}

.message a {
 color: #2d8f35;
}

.message i {
 margin: 0 12px 0 5px;
}

.message-scroll {
 display: flex;
 flex-direction: column;
 gap: 2px;
}

.message-scroll button {
 width: 9px;
 height: 7px;
 border-right: 1px solid #777;
 border-bottom: 1px solid #777;
 background-color: #ececec;
}

.message-scroll button::before {
 content: "";
 width: 2px;
 height: 1px;
 background-color: #9a9;
}

.dismiss svg {
 width: 12px;
 height: 12px;
}

.message .caret {
 margin: 0 1px 0 3px;
}

.canvas-row {
 flex: 1;
 display: flex;
 min-height: 0;
}

.ruler {
 width: 14px;
 height: 100%;
}

.ruler-text {
 font-size: 7px;
 fill: #555;
}

.canvas {
 position: relative;
 flex: 1;
 min-width: 0;
 padding: 11px 0;
 background-color: #d7d7d7;
 overflow: hidden;
}

.sheet {
 display: flex;
 flex-direction: column;
 width: 247px;
 margin: 0 auto;
 padding: 8px 12px 15px;
 background-color: #fff;
 box-shadow: 4px 4px #929292;
}

.map-frame {
 padding-top: 11px;
 border: 2px solid #fdc981;
}

.map-frame h2 {
 margin-bottom: 5px;
 font-size: 10px;
 line-height: 14px;
 text-align: center;
 color: #444;
}

.map {
 width: 100%;
}

.scale-text {
 font-size: 5px;
 text-anchor: middle;
 fill: #333;
}

.sheet-footer {
 display: flex;
 border: 2px solid #fdc981;
 border-top: none;
 font-family: "Liberation Sans", sans-serif;
}

.legend {
 display: grid;
 grid-template-columns: 50px 1fr;
 align-content: center;
 width: 109px;
 padding: 9px 0 1px 4px;
 border-right: 2px solid #fdc981;
}

.legend li {
 display: flex;
 align-items: center;
 gap: 2px;
 font-size: 5px;
 line-height: 11px;
 white-space: nowrap;
}

.swatch {
 width: 9px;
 height: 6px;
}

.community { background-color: #e69e57; }
.open { background-color: #b2df8a; }
.business { background-color: #a6cbdf; }
.residence { background-color: #f7f700; }
.limited { background-color: #a5a5a5; }
.transport { background-color: #cb7373; }
.mixed { background-color: #f1cbff; }
.utility { background-color: #965f61; }

.credits {
 flex: 1;
 display: flex;
 flex-direction: column;
 justify-content: flex-end;
 gap: 5px;
 padding: 0 0 5px;
}

.credits p {
 font-size: 4px;
 line-height: 5px;
 text-align: center;
 white-space: nowrap;
 color: #000;
}

.author {
 display: flex;
 align-items: center;
 gap: 20px;
 padding-left: 8px;
}

.north {
 width: 16px;
 height: 24px;
}

.pointer {
 position: absolute;
 left: 355px;
 top: 101px;
 width: 9px;
 height: 14px;
}

/* Right docks */
.docks {
 display: flex;
 flex-direction: column;
 width: 281px;
 padding: 1px 0 0 4px;
 border-left: 1px solid #c9c9c9;
}

.dock header {
 display: flex;
 align-items: center;
 gap: 2px;
 height: 13px;
 padding: 0 2px 0 3px;
}

.dock h3 {
 flex: 1;
 font-size: 8px;
}

.dock header svg {
 width: 8px;
 height: 8px;
}

.history {
 display: flex;
 height: 71px;
 border: 1px solid #c4c4c4;
 border-right: none;
 background-color: #fff;
}

.history ul {
 flex: 1;
 display: grid;
 grid-auto-rows: 1fr;
 height: 63px;
}

.history li {
 padding-left: 2px;
 line-height: 10px;
}

.history .current {
 background-color: #efefef;
}

.scrollbar {
 display: flex;
 flex-direction: column;
 width: 10px;
 border-left: 1px solid #d2d2d2;
 background-color: #fafafa;
}

.scrollbar button {
 height: 9px;
}

.scrollbar button::before {
 content: "";
 width: 5px;
 height: 3px;
 background-color: #555;
 clip-path: polygon(0 0, 100% 0, 50% 100%);
}

.scrollbar .up::before {
 clip-path: polygon(50% 0, 100% 100%, 0 100%);
}

.track {
 flex: 1;
 border: solid #c4c4c4;
 border-width: 1px 0;
 background-color: #dedede;
}

.thumb {
 flex: 4;
}

.at-end .track {
 flex: 3;
}

.at-end .thumb {
 flex: 2;
}

.tabs {
 display: flex;
 align-items: flex-end;
 margin-top: 3px;
 border-bottom: 1px solid #d2d2d2;
}

.tabs button {
 height: 14px;
 padding: 0 7px;
 border: 1px solid #bfbfbf;
 border-bottom: none;
 background: linear-gradient(#dedede, #d3d3d3);
}

.tabs .selected {
 height: 16px;
 border-radius: 2px 2px 0 0;
 background: #f3f3f3;
}

.guides {
 flex: 1;
 display: flex;
 flex-direction: column;
 min-height: 0;
 padding-top: 2px;
}

.guides-scroll {
 flex: 1;
 display: flex;
 min-height: 0;
}

.guides-form {
 flex: 1;
 padding: 7px 7px 0 8px;
 overflow: hidden;
}

.page-row {
 display: flex;
 align-items: center;
 gap: 3px;
}

#page {
 flex: 1;
 height: 16px;
 padding: 0 3px;
}

.guides h4 {
 display: flex;
 align-items: center;
 gap: 5px;
 height: 17px;
 padding-left: 1px;
 font-weight: bold;
}

.guides h4::before {
 content: "";
 width: 8px;
 height: 5px;
 background-color: #333;
 clip-path: polygon(0 0, 100% 0, 50% 100%);
}

.group {
 padding: 8px;
 border: 1px solid #d8d8d8;
 background-color: #ebebeb;
}

.guide-list {
 height: 85px;
 border: 1px solid #bdbdbd;
 background-color: #fff;
}

.group-buttons {
 display: flex;
 gap: 4px;
 padding-top: 3px;
}

.group-buttons button {
 width: 20px;
 height: 18px;
 border: 1px solid #bdbdbd;
 border-radius: 2px;
 background: linear-gradient(#fff, #eee);
}

.group-buttons svg {
 width: 12px;
 height: 12px;
}

/* Status bar */
.statusbar {
 display: flex;
 align-items: center;
 justify-content: flex-end;
 height: 18px;
}

.statusbar span {
 margin-right: 20px;
}

.statusbar .page-no {
 margin-right: 48px;
}

.zoom {
 width: 76px;
 height: 15px;
 padding: 0 2px;
}

.zoom-slider {
 appearance: none;
 width: 70px;
 height: 10px;
 margin: 0 7px 0 4px;
 background: linear-gradient(#c9c9c9, #dedede) center / 100% 3px no-repeat;
}

.zoom-slider::-webkit-slider-thumb {
 appearance: none;
 width: 9px;
 height: 9px;
 border: 1px solid #aaa;
 border-radius: 2px;
 background-color: #fafafa;
}

.statusbar .size-grip {
 width: 7px;
 height: 7px;
 margin: 0 1px;
 align-self: flex-end;
 background: radial-gradient(#b5b5b5 40%, transparent 50%) 0 0 / 2px 2px;
 clip-path: polygon(100% 0, 100% 100%, 0 100%);
}

/* Watermark over the window */
.watermark {
 position: absolute;
 right: 22px;
 bottom: 14px;
 display: flex;
 align-items: center;
 gap: 7px;
 font-family: "Noto Sans", "Noto Sans CJK SC", sans-serif;
 font-size: 20px;
 line-height: 28px;
 color: rgba(120, 120, 120, 0.6);
 white-space: nowrap;
}

.watermark svg {
 width: 28px;
 height: 23px;
 fill: rgba(120, 120, 120, 0.6);
}
```
